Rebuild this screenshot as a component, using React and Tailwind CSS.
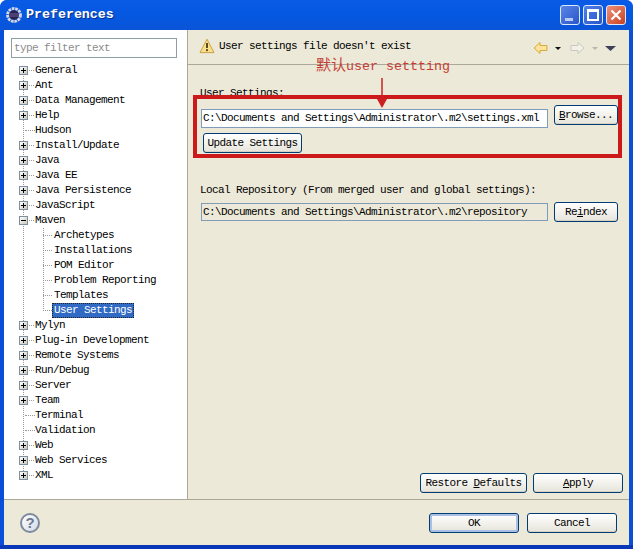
const MONO = "font-['Liberation_Mono',monospace] text-[11px] tracking-[-0.6px] leading-[15px] text-black";

function Expander({ open }) {
  return (
    <span className="relative z-10 flex h-[9px] w-[9px] shrink-0 items-center justify-center border border-[#7f8f9f] bg-gradient-to-br from-white to-[#c8c8bc]">
      <svg width="7" height="7" viewBox="0 0 7 7">
        <path d="M1 3.5H6" stroke="#000" strokeWidth="1" />
        {!open && <path d="M3.5 1V6" stroke="#000" strokeWidth="1" />}
      </svg>
    </span>
  );
}

function Row({ label, kind }) {
  return (
    <div className={`flex h-[15px] items-center pl-[15px] ${MONO}`}>
      {kind === "leaf" ? (
        <span className="w-[9px] shrink-0" />
      ) : (
        <Expander open={kind === "open"} />
      )}
      <span className={`ml-[1px] shrink-0 border-t border-dotted border-[#999] ${kind === "leaf" ? "ml-[0px] -translate-x-[4px] w-[10px] -mr-[5px]" : "w-[5px]"}`} />
      <span className="ml-[1px]">{label}</span>
    </div>
  );
}

function Child({ label, selected }) {
  return (
    <div className={`flex h-[15px] items-center pl-[39px] ${MONO}`}>
      <span className="w-[9px] shrink-0 border-t border-dotted border-[#999]" />
      {selected ? (
        <span className="h-[15px] border border-dotted border-[#222] bg-[#316ac5] px-[1px] leading-[13px] text-white">{label}</span>
      ) : (
        <span className="ml-[2px]">{label}</span>
      )}
    </div>
  );
}

function Btn({ className = "", children, primary }) {
  return (
    <button
      className={`flex shrink-0 items-center justify-center rounded-[3px] border border-[#003c74] bg-gradient-to-b from-white to-[#e6e4da] ${primary ? "shadow-[inset_0_0_0_2px_#a9bfe6]" : "shadow-[inset_0_-1px_0_#d6d0c5]"} ${MONO} ${className}`}
    >
      {children}
    </button>
  );
}

const first = [
  ["General"], ["Ant"], ["Data Management"], ["Help"], ["Hudson", "leaf"], ["Install/Update"],
  ["Java"], ["Java EE"], ["Java Persistence"], ["JavaScript"],
];
const children = ["Archetypes", "Installations", "POM Editor", "Problem Reporting", "Templates"];
const last = [
  ["Mylyn"], ["Plug-in Development"], ["Remote Systems"], ["Run/Debug"], ["Server"], ["Team"],
  ["Terminal", "leaf"], ["Validation", "leaf"], ["Web"], ["Web Services"], ["XML"],
];

function EclipseIcon() {
  return (
    <svg width="16" height="16" viewBox="0 0 16 16" className="shrink-0">
      <circle cx="8" cy="8" r="6.4" fill="none" stroke="#d8d8e4" strokeWidth="3" strokeDasharray="2.6 0.8" />
      <circle cx="8" cy="8" r="4.8" fill="#2a2350" />
      <path d="M3.4 7H12.6M3.4 9H12.6" stroke="#7d72a8" strokeWidth="0.8" />
    </svg>
  );
}

function WinButton({ children, className }) {
  return (
    <span className={`flex h-[20px] w-[20px] items-center justify-center rounded-[3px] border border-[#dfe8fb] ${className}`}>
      {children}
    </span>
  );
}

export default function App() {
  return (
    <div className="relative flex h-[549px] w-[633px] flex-col overflow-hidden rounded-t-[7px] bg-[#0b4fd8]">
      <div className="flex h-[30px] shrink-0 items-center bg-gradient-to-b from-[#0a5ae6] via-[#0458e0] to-[#0a54d8] pl-[6px] pr-[7px]">
        <EclipseIcon />
        <span className="ml-[4px] flex-1 font-['Liberation_Mono',monospace] text-[13.3px] font-bold leading-[16px] text-white [text-shadow:1px_1px_0_#0a2f8f]">Preferences</span>
        <div className="flex gap-[3px]">
          <WinButton className="bg-gradient-to-br from-[#5a86e8] to-[#2a55c8]">
            <span className="mt-[8px] -ml-[2px] h-[3px] w-[8px] bg-[#b8cbf4]" />
          </WinButton>
          <WinButton className="bg-gradient-to-br from-[#4f80ea] to-[#2a55c8]">
            <span className="h-[12px] w-[12px] border-2 border-t-[3px] border-white" />
          </WinButton>
          <WinButton className="bg-gradient-to-br from-[#ee9078] to-[#c83f1c]">
            <svg width="12" height="12" viewBox="0 0 12 12">
              <path d="M1.5 1.5L10.5 10.5M10.5 1.5L1.5 10.5" stroke="#fff" strokeWidth="2.2" />
            </svg>
          </WinButton>
        </div>
      </div>

      <div className="mx-[4px] flex min-h-0 flex-1 flex-col bg-[#ece9d8]">
        <div className="flex h-[470px] shrink-0 border-b border-[#aca899]">
          <aside className="flex w-[184px] shrink-0 flex-col border-r border-[#aca899] bg-white">
            <div className="ml-[7px] mt-[8px] flex h-[20px] w-[166px] items-center border border-[#8ea0a6] px-[2px]">
              <span className={`${MONO} !text-[#8c8c8c]`}>type filter text</span>
            </div>
            <div className="relative mt-[5px]">
              <span className="absolute left-[19px] top-[7px] h-[405px] border-l border-dotted border-[#999]" />
              {first.map(([l, k]) => <Row key={l} label={l} kind={k} />)}
              <Row label="Maven" kind="open" />
              <div className="relative">
                <span className="absolute left-[39px] top-0 h-[83px] border-l border-dotted border-[#999]" />
                {children.map((c) => <Child key={c} label={c} />)}
                <Child label="User Settings" selected />
              </div>
              {last.map(([l, k]) => <Row key={l} label={l} kind={k} />)}
            </div>
          </aside>

          <main className="flex min-w-0 flex-1 flex-col">
            <div className="flex h-[35px] shrink-0 items-center border-b border-[#aca899] pb-[2px] pl-[11px] pr-[10px]">
              <svg width="16" height="16" viewBox="0 0 16 16" className="shrink-0">
                <path d="M8 1.2L15 14.6H1Z" fill="#fbe08a" stroke="#c9a04a" strokeLinejoin="round" />
                <path d="M8 5V10" stroke="#5a4a20" strokeWidth="2" />
                <circle cx="8" cy="12.2" r="1.1" fill="#5a4a20" />
              </svg>
              <span className={`ml-[4px] flex-1 ${MONO}`}>User settings file doesn't exist</span>
              <svg width="86" height="14" viewBox="0 0 86 14" className="mt-[4px] shrink-0">
                <path d="M1 7L7 1.5V4.5H14V9.5H7V12.5Z" fill="#fde49a" stroke="#d6a93c" />
                <path d="M22 6H28L25 9Z" fill="#111" />
                <path d="M51 7L45 1.5V4.5H38V9.5H45V12.5Z" fill="#f1f1ea" stroke="#c9c9c0" />
                <path d="M59 6H65L62 9Z" fill="#b8b8b0" />
                <path d="M72 5H83L77.5 10Z" fill="#3f3f5a" />
              </svg>
            </div>

            <div className="flex flex-1 flex-col px-[12px]">
              <div className={`mt-[21px] ${MONO}`}>User <span className="underline">S</span>ettings:</div>
              <div className="ml-[1px] mt-[2px] flex items-start gap-[6px]">
                <div className={`mt-[6px] flex h-[19px] w-[347px] shrink-0 items-center border border-[#7f9db9] bg-white pl-[1px] ${MONO}`}>
                  C:\Documents and Settings\Administrator\.m2\settings.xml
                </div>
                <Btn className="mt-[2px] h-[20px] w-[64px]"><span><span className="underline">B</span>rowse...</span></Btn>
              </div>
              <Btn className="ml-[3px] mt-[5px] h-[20px] w-[99px]">Update Settings</Btn>

              <div className={`mt-[30px] ${MONO}`}>Local Repository (From merged user and global settings):</div>
              <div className="ml-[1px] mt-[4px] flex items-center gap-[6px]">
                <div className={`flex h-[18px] w-[347px] shrink-0 items-center border border-[#7f9db9] bg-[#ece9d8] pl-[1px] ${MONO}`}>
                  C:\Documents and Settings\Administrator\.m2\repository
                </div>
                <Btn className="h-[20px] w-[64px]"><span>Re<span className="underline">i</span>ndex</span></Btn>
              </div>

              <div className="mt-auto mb-[6px] -mr-[6px] flex justify-end gap-[6px]">
                <Btn className="h-[20px] w-[107px]"><span>Restore <span className="underline">D</span>efaults</span></Btn>
                <Btn className="h-[20px] w-[90px]"><span><span className="underline">A</span>pply</span></Btn>
              </div>
            </div>
          </main>
        </div>

        <div className="flex flex-1 items-center pl-[16px] pr-[12px]">
          <span className="flex h-[20px] w-[20px] items-center justify-center rounded-full border-2 border-[#7d8a9e] bg-gradient-to-br from-[#ffffff] to-[#d4dae6] font-['Liberation_Sans',sans-serif] text-[15px] font-bold leading-none text-[#6a7890]">?</span>
          <div className="ml-auto mt-[1px] flex gap-[8px]">
            <Btn primary className="h-[20px] w-[90px]">OK</Btn>
            <Btn className="h-[20px] w-[90px]">Cancel</Btn>
          </div>
        </div>
      </div>
      <div className="h-[4px] shrink-0 bg-[#0838b8]" />

      <div className="absolute left-[193px] top-[95px] h-[63px] w-[429px] border-[4px] border-[#cc1a1a]" />
      <span className="absolute left-[316px] top-[58px] font-['Liberation_Mono','Noto_Sans_CJK_SC',monospace] text-[13.33px] leading-[18px] text-[#c43c34]">
        <span className="text-[15px]">默认</span>user settting
      </span>
      <svg className="absolute left-[376px] top-[78px]" width="12" height="31" viewBox="0 0 12 31">
        <path d="M6 0V22" stroke="#cc2020" strokeWidth="1.5" />
        <path d="M1 21H11L6 30Z" fill="#cc2020" />
      </svg>
    </div>
  );
}
